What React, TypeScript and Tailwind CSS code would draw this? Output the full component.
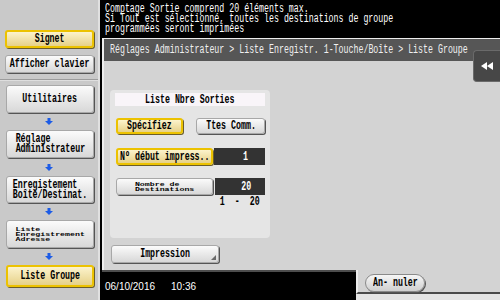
import React from "react";

type P = { className?: string; children?: React.ReactNode };

function T({ children, className = "" }: P) {
  return (
    <span
      className={`inline-block whitespace-pre font-['Liberation_Mono',monospace] text-[12px] leading-[10px] font-bold text-black scale-x-[0.69] ${className}`}
    >
      {children}
    </span>
  );
}

function Tiny({ children, className = "" }: P) {
  return (
    <span
      className={`inline-block whitespace-pre text-left font-['Liberation_Mono',monospace] text-[11px] leading-[10px] font-bold text-black scale-x-[0.75] scale-y-[0.5] ${className}`}
    >
      {children}
    </span>
  );
}

function GBtn({ children, className = "" }: P) {
  return (
    <div
      className={`relative flex items-center justify-center rounded-[3px] border border-[#a8a8a8] bg-linear-to-b from-[#fbfbfb] to-[#d8d8d8] shadow-[1px_1px_0_#555555] ${className}`}
    >
      {children}
    </div>
  );
}

function YBtn({ children, className = "" }: P) {
  return (
    <div
      className={`flex items-center justify-center rounded-[3px] border-2 border-[#ecc200] bg-linear-to-b from-[#fcf3cc] to-[#e6d188] shadow-[1px_1px_0_#6b5e2a] ${className}`}
    >
      {children}
    </div>
  );
}

function Arrow({ className = "h-[17px]" }: P) {
  return (
    <div className={`w-full flex items-center justify-center ${className}`}>
      <svg width="8" height="7" viewBox="0 0 8 7">
        <path d="M2.5 0h3v3H8L4 7 0 3h2.5z" fill="#1d5ce6" />
      </svg>
    </div>
  );
}

export default function App() {
  return (
    <div className="relative w-[500px] h-[300px] flex overflow-hidden bg-black">
      {/* Sidebar */}
      <div className="w-[100px] h-full shrink-0 bg-[#c9c9c9] border-r-2 border-r-[#e0e0e0] flex flex-col">
        <YBtn className="mt-[30px] ml-[5px] w-[89px] h-[18px]">
          <T>Signet</T>
        </YBtn>
        <GBtn className="mt-[7px] ml-[5px] w-[89px] h-[18px]">
          <T>Afficher clavier</T>
        </GBtn>
        <div className="mt-[6px] h-px bg-[#9c9c9c]" />
        <div className="h-px bg-[#dedede]" />
        <GBtn className="mt-[4px] ml-[6px] w-[88px] h-[28px]">
          <T>Utilitaires</T>
        </GBtn>
        <Arrow />
        <GBtn className="ml-[6px] w-[88px] h-[28px]">
          <T className="text-left">{"Réglage\nAdministrateur"}</T>
        </GBtn>
        <Arrow className="h-[18px]" />
        <GBtn className="ml-[6px] w-[88px] h-[27px]">
          <T className="text-left">{"Enregistement\nBoîte/Destinat."}</T>
        </GBtn>
        <Arrow />
        <GBtn className="ml-[6px] w-[88px] h-[28px]">
          <Tiny>{"Liste\nEnregistrement\nAdresse"}</Tiny>
        </GBtn>
        <Arrow />
        <YBtn className="ml-[6px] w-[88px] h-[22px]">
          <T>Liste Groupe</T>
        </YBtn>
      </div>

      {/* Right column */}
      <div className="flex-1 flex flex-col">
        <div className="h-[38px] pl-[5px] pt-[4px]">
          <div className="origin-left scale-x-[0.69] whitespace-pre font-['Liberation_Mono',monospace] text-[12px] leading-[10px] text-white">
            {"Comptage Sortie comprend 20 éléments max.\nSi Tout est sélectionné, toutes les destinations de groupe\nprogrammées seront imprimées"}
          </div>
        </div>

        <div className="ml-[2px] mr-[1px] h-[232px] flex flex-col items-start bg-[#d3d3d3] border-t border-t-[#ececec] border-l-2 border-l-[#ececec] border-r-2 border-r-[#4a4a4a]">
          <div className="w-full h-[22px] flex items-center bg-[#565656] border-r border-r-[#e0e0e0] pl-[6px]">
            <div className="origin-left scale-x-[0.69] whitespace-pre font-['Liberation_Mono',monospace] text-[12px] leading-[10px] text-[#f0f0f0]">
              {"Réglages Administrateur > Liste Enregistr. 1-Touche/Boîte > Liste Groupe"}
            </div>
          </div>

          {/* Card */}
          <div className="mt-[29px] ml-[6px] w-[160px] h-[148px] rounded-[4px] bg-[#e5e5e5] flex flex-col">
            <div className="mt-[3px] mx-[5px] h-[13px] bg-[#f9f5f9] flex items-center justify-center">
              <T>Liste Nbre Sorties</T>
            </div>
            <div className="mt-[12px] ml-[6px] h-[16px] flex">
              <YBtn className="w-[67px] h-full">
                <T>Spécifiez</T>
              </YBtn>
              <GBtn className="ml-[13px] w-[69px] h-full">
                <T>Ttes Comm.</T>
              </GBtn>
            </div>
            <div className="mt-[14px] ml-[6px] h-[17px] flex">
              <YBtn className="w-[97px] h-full">
                <T>Nº début impress..</T>
              </YBtn>
              <div className="ml-[1px] w-[51px] h-full bg-[#333333] flex items-center justify-center pl-[12px]">
                <T className="text-white">1</T>
              </div>
            </div>
            <div className="mt-[13px] ml-[6px] h-[17px] flex">
              <GBtn className="w-[97px] h-full">
                <Tiny>{"Nombre de\nDestinations"}</Tiny>
              </GBtn>
              <div className="ml-[2px] w-[50px] h-full bg-[#333333] flex items-center justify-center pl-[12px]">
                <T className="text-white">20</T>
              </div>
            </div>
            <div className="mt-[1px] h-[12px] pr-[10px] flex items-center justify-end">
              <T className="origin-right">{"1  -  20"}</T>
            </div>
          </div>

          <GBtn className="mt-[7px] ml-[7px] w-[108px] h-[18px]">
            <T>Impression</T>
            <svg className="absolute right-[2px] bottom-[2px]" width="5" height="5" viewBox="0 0 5 5">
              <path d="M5 0L5 5L0 5z" fill="#6a6a6a" />
            </svg>
          </GBtn>
        </div>

        {/* Bottom row */}
        <div className="flex-1 flex">
          <div className="w-[256px] flex flex-col">
            <div className="ml-[2px] h-[2px] bg-[#4d4d4d]" />
            <div className="flex-1 flex items-center pl-[5px] font-['Liberation_Sans',Arial,sans-serif] text-[10px] text-white">
              <span>06/10/2016</span>
              <span className="ml-[16px]">10:36</span>
            </div>
          </div>
          <div className="flex-1 flex flex-col mr-[1px]">
            <div className="h-[24px] bg-[#d3d3d3] border-l-2 border-l-[#ececec] border-r-2 border-r-[#4a4a4a] border-b-2 border-b-[#4a4a4a] pl-[7px] pt-[4px]">
              <div className="w-[60px] h-[18px] rounded-full border border-[#8a8a8a] bg-linear-to-b from-[#f6f6f6] to-[#cfcfcf] shadow-[1px_1px_0_#555555] flex items-center justify-center">
                <T>An- nuler</T>
              </div>
            </div>
            <div className="flex-1 bg-[#e4e4e4]" />
          </div>
        </div>
      </div>

      {/* Side tab */}
      <div className="absolute top-[50px] right-0 w-[27px] h-[32px] rounded-l-[4px] bg-[#474747] border border-r-0 border-[#6a6a6a] flex items-center justify-center">
        <svg width="12" height="8" viewBox="0 0 12 8">
          <path d="M6 0L0 4L6 8z M12 0L6 4L12 8z" fill="#ffffff" />
        </svg>
      </div>
    </div>
  );
}
